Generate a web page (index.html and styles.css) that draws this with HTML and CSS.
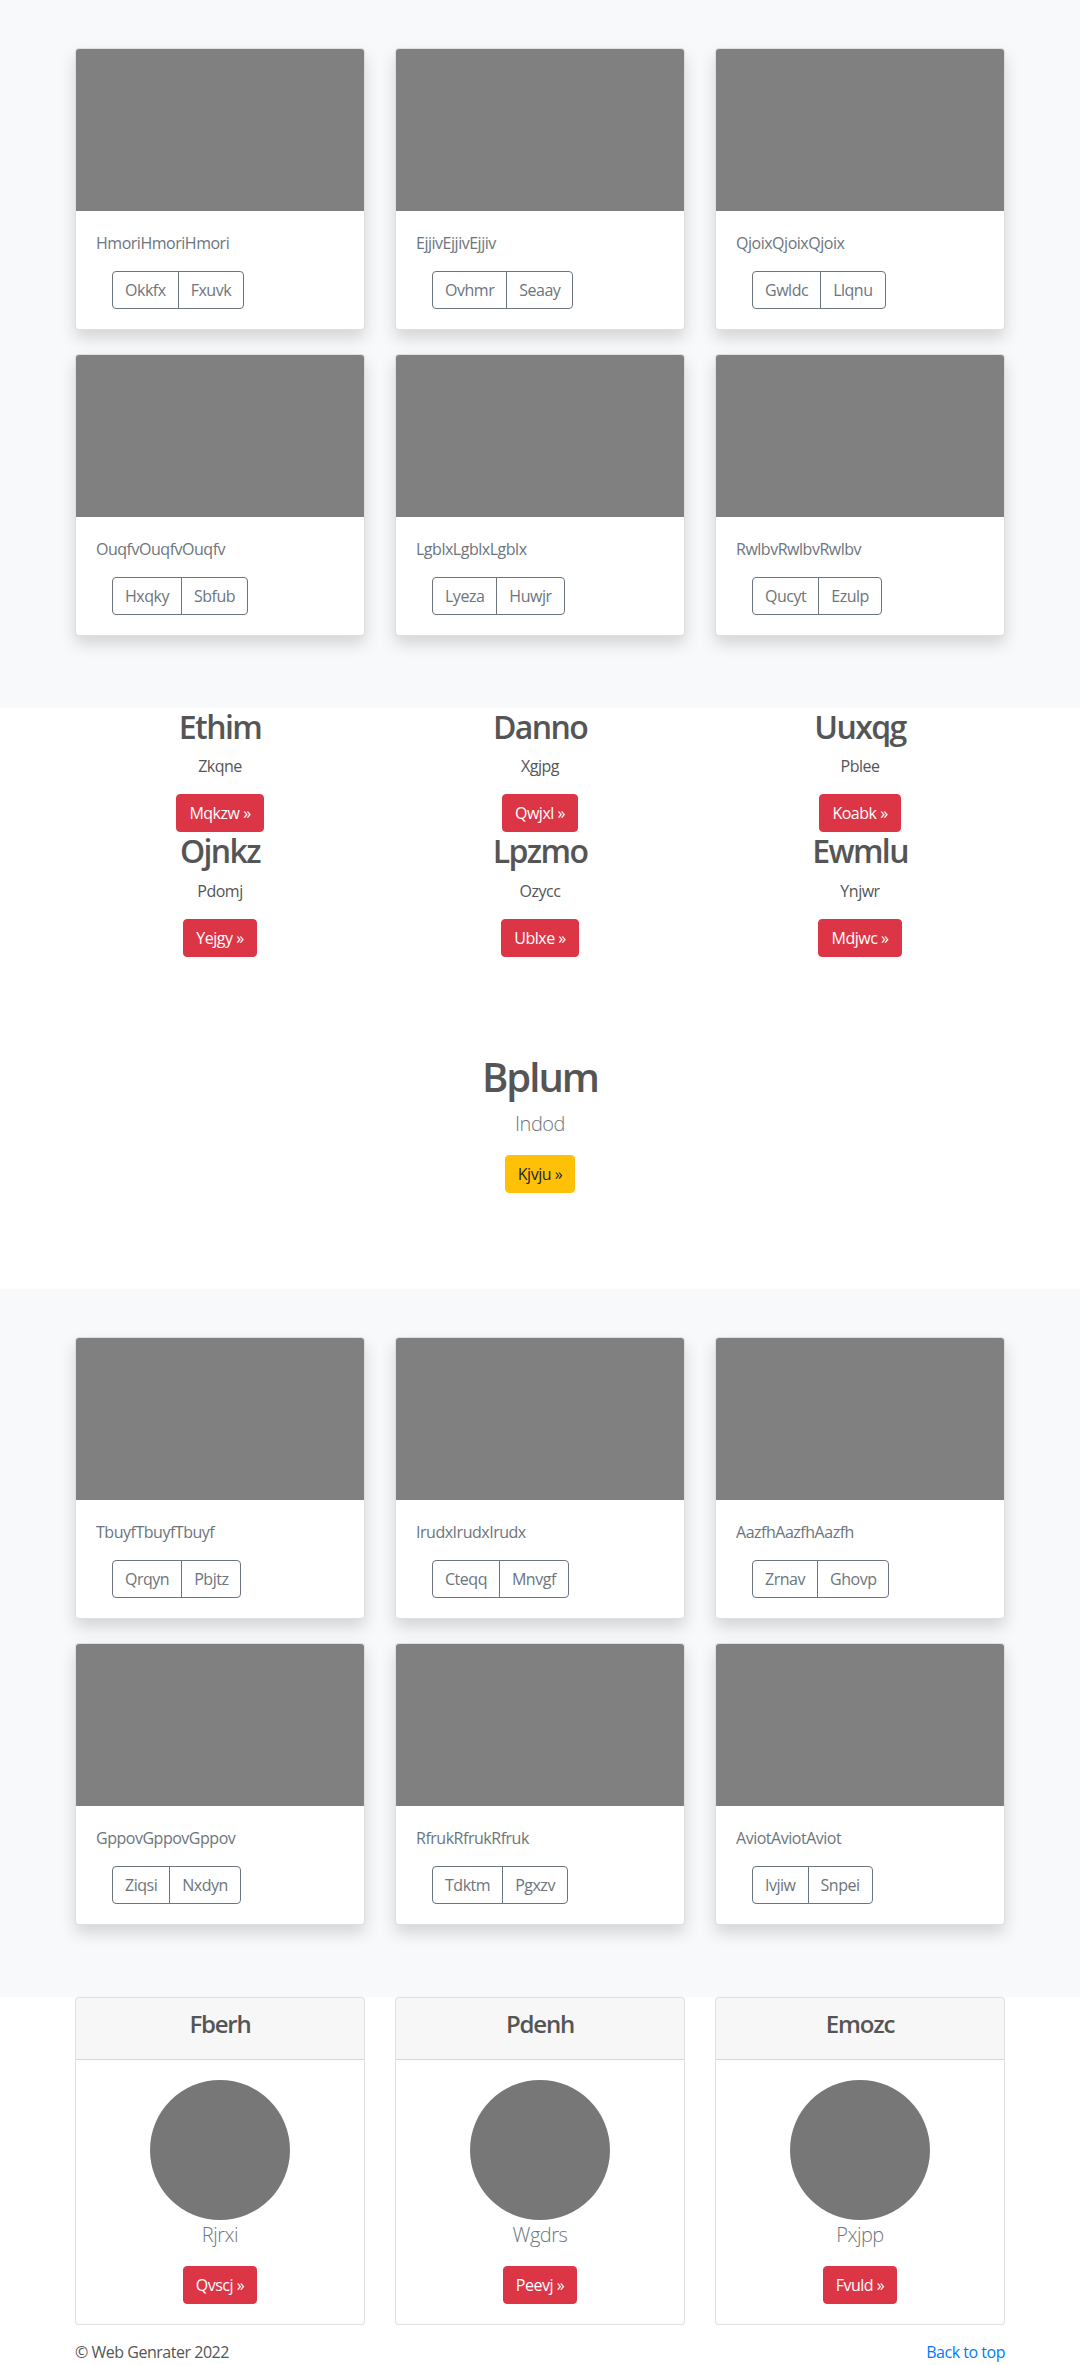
FILE: index.html
```html
<!DOCTYPE html>
<html lang="en">
<head>
<meta charset="utf-8">
<title>Web Genrater</title>
<link rel="stylesheet" href="styles.css">
</head>
<body>
<main>
  <section class="album">
    <div class="container grid3 cards-grid">
      <div class="card shadow"><div class="thumb"></div><div class="card-body"><p class="card-text">HmoriHmoriHmori</p><div class="btn-group"><button class="btn btn-outline">Okkfx</button><button class="btn btn-outline">Fxuvk</button></div></div></div>
      <div class="card shadow"><div class="thumb"></div><div class="card-body"><p class="card-text">EjjivEjjivEjjiv</p><div class="btn-group"><button class="btn btn-outline">Ovhmr</button><button class="btn btn-outline">Seaay</button></div></div></div>
      <div class="card shadow"><div class="thumb"></div><div class="card-body"><p class="card-text">QjoixQjoixQjoix</p><div class="btn-group"><button class="btn btn-outline">Gwldc</button><button class="btn btn-outline">Llqnu</button></div></div></div>
      <div class="card shadow"><div class="thumb"></div><div class="card-body"><p class="card-text">OuqfvOuqfvOuqfv</p><div class="btn-group"><button class="btn btn-outline">Hxqky</button><button class="btn btn-outline">Sbfub</button></div></div></div>
      <div class="card shadow"><div class="thumb"></div><div class="card-body"><p class="card-text">LgblxLgblxLgblx</p><div class="btn-group"><button class="btn btn-outline">Lyeza</button><button class="btn btn-outline">Huwjr</button></div></div></div>
      <div class="card shadow"><div class="thumb"></div><div class="card-body"><p class="card-text">RwlbvRwlbvRwlbv</p><div class="btn-group"><button class="btn btn-outline">Qucyt</button><button class="btn btn-outline">Ezulp</button></div></div></div>
    </div>
  </section>

  <section class="features">
    <div class="container grid3">
      <div class="feature"><h2>Ethim</h2><p>Zkqne</p><a class="btn btn-danger" href="#">Mqkzw »</a></div>
      <div class="feature"><h2>Danno</h2><p>Xgjpg</p><a class="btn btn-danger" href="#">Qwjxl »</a></div>
      <div class="feature"><h2>Uuxqg</h2><p>Pblee</p><a class="btn btn-danger" href="#">Koabk »</a></div>
      <div class="feature"><h2>Ojnkz</h2><p>Pdomj</p><a class="btn btn-danger" href="#">Yejgy »</a></div>
      <div class="feature"><h2>Lpzmo</h2><p>Ozycc</p><a class="btn btn-danger" href="#">Ublxe »</a></div>
      <div class="feature"><h2>Ewmlu</h2><p>Ynjwr</p><a class="btn btn-danger" href="#">Mdjwc »</a></div>
    </div>
  </section>

  <section class="hero">
    <h1>Bplum</h1>
    <p class="lead">Indod</p>
    <a class="btn btn-warning" href="#">Kjvju »</a>
  </section>

  <section class="album">
    <div class="container grid3 cards-grid">
      <div class="card shadow"><div class="thumb"></div><div class="card-body"><p class="card-text">TbuyfTbuyfTbuyf</p><div class="btn-group"><button class="btn btn-outline">Qrqyn</button><button class="btn btn-outline">Pbjtz</button></div></div></div>
      <div class="card shadow"><div class="thumb"></div><div class="card-body"><p class="card-text">IrudxIrudxIrudx</p><div class="btn-group"><button class="btn btn-outline">Cteqq</button><button class="btn btn-outline">Mnvgf</button></div></div></div>
      <div class="card shadow"><div class="thumb"></div><div class="card-body"><p class="card-text">AazfhAazfhAazfh</p><div class="btn-group"><button class="btn btn-outline">Zrnav</button><button class="btn btn-outline">Ghovp</button></div></div></div>
      <div class="card shadow"><div class="thumb"></div><div class="card-body"><p class="card-text">GppovGppovGppov</p><div class="btn-group"><button class="btn btn-outline">Ziqsi</button><button class="btn btn-outline">Nxdyn</button></div></div></div>
      <div class="card shadow"><div class="thumb"></div><div class="card-body"><p class="card-text">RfrukRfrukRfruk</p><div class="btn-group"><button class="btn btn-outline">Tdktm</button><button class="btn btn-outline">Pgxzv</button></div></div></div>
      <div class="card shadow"><div class="thumb"></div><div class="card-body"><p class="card-text">AviotAviotAviot</p><div class="btn-group"><button class="btn btn-outline">Ivjiw</button><button class="btn btn-outline">Snpei</button></div></div></div>
    </div>
  </section>

  <section class="people">
    <div class="container grid3">
      <div class="card"><div class="card-header"><h4>Fberh</h4></div><div class="card-body center"><div class="avatar"></div><p class="lead">Rjrxi</p><a class="btn btn-danger" href="#">Qvscj »</a></div></div>
      <div class="card"><div class="card-header"><h4>Pdenh</h4></div><div class="card-body center"><div class="avatar"></div><p class="lead">Wgdrs</p><a class="btn btn-danger" href="#">Peevj »</a></div></div>
      <div class="card"><div class="card-header"><h4>Emozc</h4></div><div class="card-body center"><div class="avatar"></div><p class="lead">Pxjpp</p><a class="btn btn-danger" href="#">Fvuld »</a></div></div>
    </div>
  </section>
</main>

<footer class="footer">
  <div class="container footer-row">
    <p>© Web Genrater 2022</p>
    <a href="#" class="top-link">Back to top</a>
  </div>
</footer>
</body>
</html>
```

FILE: styles.css
```css
* { box-sizing: border-box; }

body {
  margin: 0;
  font-family: "Open Sans", "Noto Sans", sans-serif;
  font-size: 16px;
  line-height: 1.5;
  letter-spacing: -0.03em;
  color: #555;
  background: #fff;
}

p { margin: 0 0 16px; }
h1, h2, h4 { margin: 0 0 8px; line-height: 1.2; font-weight: 600; color: #555; letter-spacing: -0.05em; }

.container { width: 930px; margin: 0 auto; }

.grid3 {
  display: grid;
  grid-template-columns: repeat(3, 1fr);
  column-gap: 30px;
}

.album { background: #f8f9fa; padding: 48px 0; }
.cards-grid { row-gap: 0; }
.cards-grid .card { margin-bottom: 24px; }

.card {
  background: #fff;
  border: 1px solid rgba(0,0,0,.125);
  border-radius: 4px;
  overflow: hidden;
}
.card.shadow { box-shadow: 0 8px 16px rgba(0,0,0,.15); }

.thumb { height: 162px; background: #808080; }

.card-body { padding: 20px; }
.card-text { color: #6c757d; }

.btn {
  display: inline-block;
  font-family: inherit;
  font-size: 16px;
  line-height: 24px;
  letter-spacing: -0.03em;
  padding: 6px 12px;
  border: 1px solid transparent;
  border-radius: 4px;
  text-decoration: none;
  background: transparent;
  cursor: pointer;
}
.btn-group { display: inline-flex; margin-left: 16px; }
.btn-outline { color: #6c757d; border-color: #6c757d; }
.btn-group .btn-outline:first-child { border-top-right-radius: 0; border-bottom-right-radius: 0; }
.btn-group .btn-outline + .btn-outline { margin-left: -1px; border-top-left-radius: 0; border-bottom-left-radius: 0; }

.btn-danger { background: #dc3545; border-color: #dc3545; color: #fff; }
.btn-warning { background: #ffc107; border-color: #ffc107; color: #212529; }

.features .grid3 { row-gap: 0; }
.feature { text-align: center; }
.feature h2 { font-size: 32px; }

.hero { padding: 96px 0; text-align: center; }
.hero h1 { font-size: 40px; }
.lead { font-size: 20px; font-weight: 300; line-height: 30px; color: #6c757d; }

.people .card-header {
  background: rgba(0,0,0,.03);
  border-bottom: 1px solid rgba(0,0,0,.125);
  padding: 12px 20px;
  text-align: center;
}
.people h4 { font-size: 24px; }
.center { text-align: center; }
.avatar { width: 140px; height: 140px; border-radius: 50%; background: #777; margin: 0 auto; }
.people .lead { margin-bottom: 16px; }

.footer { padding-top: 15px; }
.footer-row { display: flex; justify-content: space-between; }
.footer p { margin: 0; color: #555; }
.top-link { color: #007bff; text-decoration: none; }
```
